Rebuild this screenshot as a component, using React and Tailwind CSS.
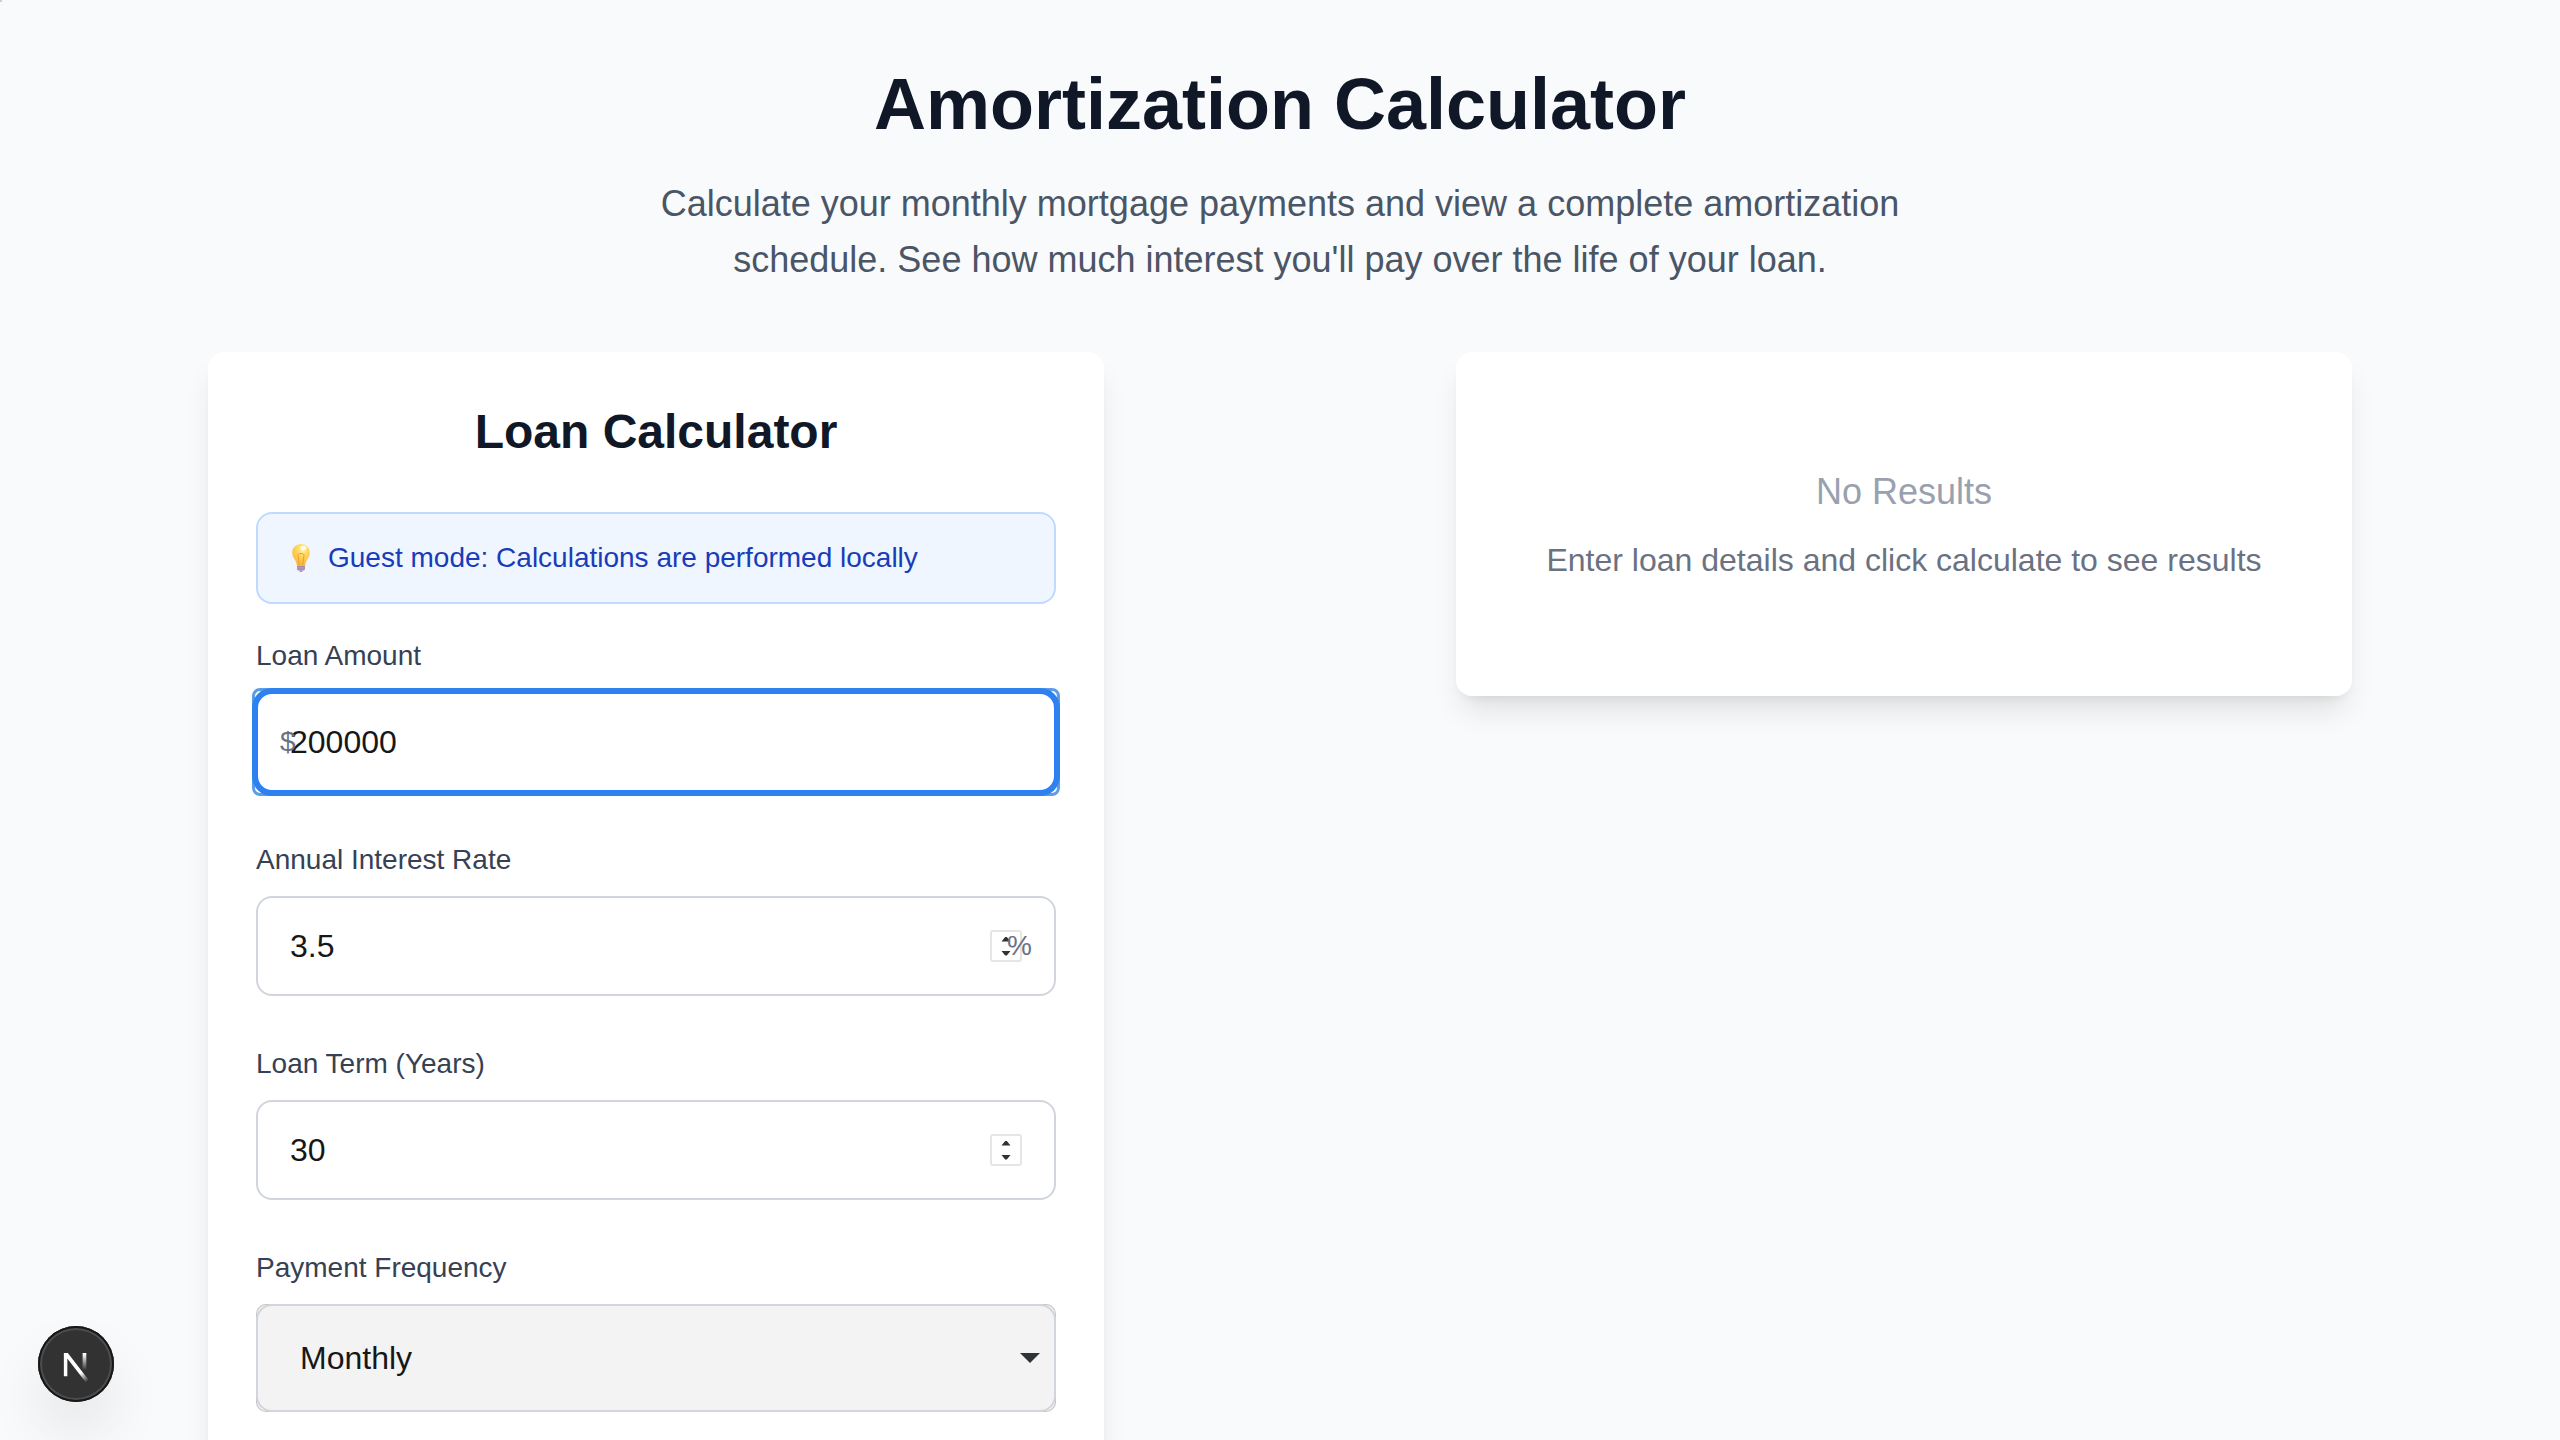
import { useState } from "react";

const card =
  "w-full max-w-[896px] rounded-2xl bg-white p-12 shadow-[0_20px_30px_-6px_rgb(0_0_0/0.1),0_8px_12px_-8px_rgb(0_0_0/0.1)]";
const inputBase =
  "block w-full rounded-2xl border-2 bg-white px-8 py-6 text-[32px] leading-[48px] text-[#171717] outline-none";

function Field({ id, label, children }) {
  return (
    <div>
      <label htmlFor={id} className="mb-4 block text-[28px] leading-10 text-gray-700">
        {label}
      </label>
      <div className="relative">{children}</div>
    </div>
  );
}

function LightBulb() {
  return (
    <svg viewBox="0 0 36 36" className="size-9 shrink-0" aria-hidden="true">
      <defs>
        <radialGradient id="bulb" cx="0.6" cy="0.25" r="0.75">
          <stop offset="0" stopColor="#fff6c2" />
          <stop offset="0.35" stopColor="#ffdc62" />
          <stop offset="1" stopColor="#fbb63a" />
        </radialGradient>
      </defs>
      <path
        d="M19 4c-5 0-8.800 3.600-8.800 8.500 0 3 1.200 5 2.700 7.200 1 1.500 1.600 3 1.900 5.500h8.400c.3-2.500.9-4 1.900-5.500 1.500-2.200 2.700-4.200 2.700-7.200C27.800 7.600 24 4 19 4z"
        fill="url(#bulb)"
      />
      <path d="M17.300 24.500 16 15.500c-.4-2.600 6.400-2.600 6 0l-1.300 9" fill="none" stroke="#f09b28" strokeWidth="1" />
      <ellipse cx="21.500" cy="8" rx="3" ry="2.200" fill="#fff" opacity="0.8" />
      <path d="M15 25.200h8v4.300l-1.600 1.200h-4.800L15 29.500z" fill="#b9a3c4" />
      <path d="M15 26.800h8M15.200 29h7.600" stroke="#8d7a9e" strokeWidth="0.800" />
      <path d="M17.200 30.700h3.600l-.8 1h-2z" fill="#857298" />
    </svg>
  );
}

function Stepper() {
  return (
    <svg
      viewBox="0 0 32 32"
      className="pointer-events-none absolute top-1/2 right-[34px] size-8 -translate-y-1/2"
      aria-hidden="true"
    >
      <rect x="1" y="1" width="30" height="30" rx="2" fill="#fff" stroke="#e5e5e5" strokeWidth="2" />
      <path d="M11.500 11.500 15.200 7h1.600l3.700 4.500zM11.500 21l3.700 4.500h1.600l3.700-4.500z" fill="#2e3436" />
    </svg>
  );
}

function DevBadge() {
  return (
    <button
      type="button"
      aria-label="Open developer tools"
      className="fixed bottom-[38px] left-[38px] size-[76px] rounded-full bg-[#323232] shadow-[0_0_0_2px_#171717_inset,0_0_0_4px_#4d4d4d_inset,0_32px_64px_-16px_rgb(0_0_0/0.24)]"
    >
      <svg viewBox="0 0 76 76" className="size-full" fill="none" aria-hidden="true">
        <defs>
          <linearGradient id="diag" x1="9.950" y1="11.100" x2="13.300" y2="15.300" gradientUnits="userSpaceOnUse">
            <stop stopColor="#fff" />
            <stop offset="1" stopColor="#fff" stopOpacity="0" />
          </linearGradient>
          <linearGradient id="stem" x1="11.800" y1="1.400" x2="11.790" y2="9.600" gradientUnits="userSpaceOnUse">
            <stop stopColor="#fff" />
            <stop offset="1" stopColor="#fff" stopOpacity="0" />
          </linearGradient>
          <clipPath id="nclip">
            <rect x="1.410" y="1" width="14" height="15" />
          </clipPath>
        </defs>
        <g transform="translate(22.800 25) scale(2)" clipPath="url(#nclip)">
          <path d="M13.300 15.200 2.340 1v11.600" stroke="url(#diag)" strokeWidth="1.860" />
          <path d="M10.900 1h1.860v12H10.900z" fill="url(#stem)" />
        </g>
      </svg>
    </button>
  );
}

export default function App() {
  const [amount, setAmount] = useState("200000");
  const [rate, setRate] = useState("3.5");
  const [term, setTerm] = useState("30");

  return (
    <div className="min-h-screen bg-gray-50 px-16 py-16 font-['Liberation_Sans',Arial,sans-serif]">
      <span className="absolute top-0 left-0 size-0.5 bg-[#cccdce]" />
      <header className="mb-16 text-center">
        <h1 className="mb-8 text-[72px] leading-[80px] font-bold text-gray-900">Amortization Calculator</h1>
        <p className="mx-auto max-w-[1344px] text-[36px] leading-[56px] text-gray-600">
          Calculate your monthly mortgage payments and view a complete amortization schedule. See how much interest
          you'll pay over the life of your loan.
        </p>
      </header>

      <main className="grid grid-cols-2 items-start justify-items-center gap-16">
        <section className={card}>
          <h2 className="mb-12 text-center text-[48px] leading-[64px] font-bold text-gray-900">Loan Calculator</h2>
          <div className="mb-8 flex items-center gap-2.5 rounded-2xl border-2 border-blue-200 bg-blue-50 p-6 text-[28px] leading-10 text-blue-800">
            <LightBulb />
            <p>Guest mode: Calculations are performed locally</p>
          </div>

          <form className="flex flex-col gap-12">
            <Field id="amount" label="Loan Amount">
              <span className="absolute -inset-1 rounded-lg border-3 border-[#5c9de9]" />
              <input
                id="amount"
                type="text"
                inputMode="numeric"
                value={amount}
                onChange={(e) => setAmount(e.target.value)}
                className={`${inputBase} relative border-[#2b7fff] shadow-[0_0_0_4px_#3082eb]`}
              />
              <span className="pointer-events-none absolute top-1/2 left-6 -translate-y-1/2 text-[28px] leading-10 text-gray-500">
                $
              </span>
            </Field>

            <Field id="rate" label="Annual Interest Rate">
              <input
                id="rate"
                type="text"
                inputMode="decimal"
                value={rate}
                onChange={(e) => setRate(e.target.value)}
                className={`${inputBase} border-gray-300`}
              />
              <Stepper />
              <span className="pointer-events-none absolute top-1/2 right-6 -translate-y-1/2 text-[28px] leading-10 text-gray-500">
                %
              </span>
            </Field>

            <Field id="term" label="Loan Term (Years)">
              <input
                id="term"
                type="text"
                inputMode="numeric"
                value={term}
                onChange={(e) => setTerm(e.target.value)}
                className={`${inputBase} border-gray-300`}
              />
              <Stepper />
            </Field>

            <Field id="frequency" label="Payment Frequency">
              <div className="rounded-[10px] bg-[#f3f3f3] shadow-[0_0_0_1px_#c4c4c4_inset]">
                <select
                  id="frequency"
                  defaultValue="Monthly"
                  className="block w-full appearance-none rounded-2xl border-2 border-gray-300 bg-[#f3f3f3] px-[42px] py-7 text-[32px] leading-[48px] text-[#171717] outline-none"
                >
                  <option>Monthly</option>
                </select>
              </div>
              <svg
                viewBox="0 0 20 10"
                className="pointer-events-none absolute top-1/2 right-4 h-2.5 w-5 -translate-y-1/2"
                aria-hidden="true"
              >
                <path d="M0 0h20L10 10z" fill="#2e3436" />
              </svg>
            </Field>
          </form>
        </section>

        <section className={card}>
          <div className="py-16 text-center">
            <p className="mb-4 text-[36px] leading-[56px] text-gray-400">No Results</p>
            <p className="text-[32px] leading-[48px] text-gray-500">
              Enter loan details and click calculate to see results
            </p>
          </div>
        </section>
      </main>

      <DevBadge />
    </div>
  );
}
